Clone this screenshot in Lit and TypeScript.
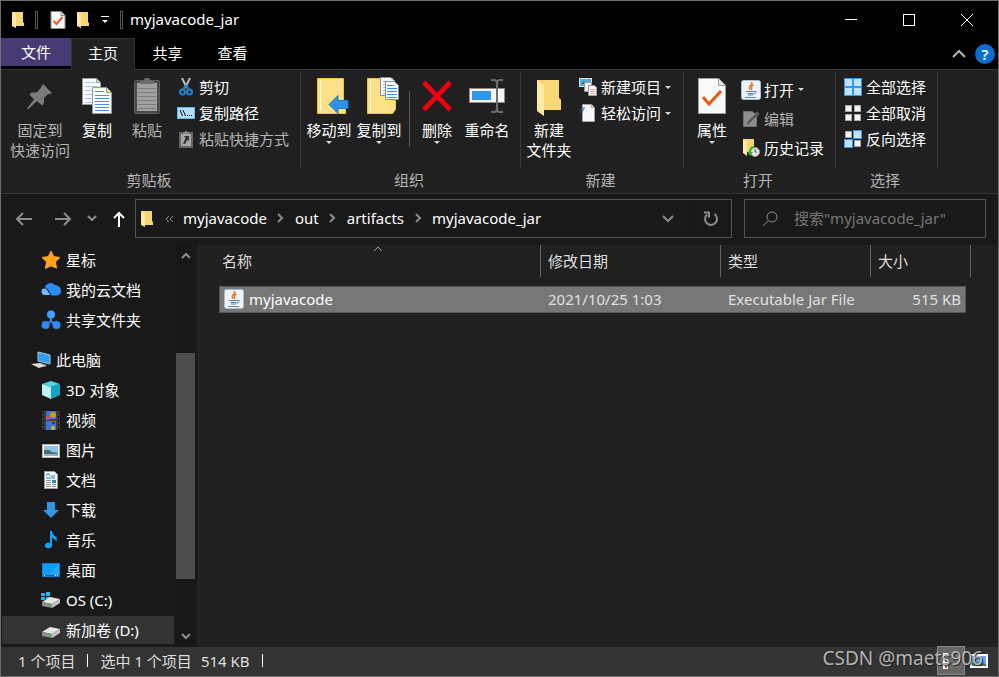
import { LitElement, html, svg, css, nothing } from "lit";
import type { TemplateResult } from "lit";
import { customElement } from "lit/decorators.js";
import { classMap } from "lit/directives/class-map.js";

const icon = (w: number, h: number, body: TemplateResult) =>
  html`<svg width=${w} height=${h} viewBox="0 0 ${w} ${h}" aria-hidden="true">${body}</svg>`;

const lines = (x: number, y: number, w: number, n: number, step: number, color: string) =>
  Array.from({ length: n }, (_, i) => svg`<rect x=${x} y=${y + i * step} width=${w} height="1" fill=${color} />`);

const folderSmall = icon(14, 18, svg`
  <path d="M1 1h11v11h1v3H6z" fill="#f3cc63" />
  <path d="M1 1h11v10l1 1v3H4V3z" fill="#f7d774" />
  <path d="M1 1l4 2v14l-4-2z" fill="#ffe9a3" />`);

const checkDoc = icon(16, 18, svg`
  <path d="M1 .5h10l4 4v13H1z" fill="#f7f9fc" stroke="#8e8e8e" />
  <path d="M11 .5v4h4" fill="#ddd" stroke="#8e8e8e" />
  <path d="M3.500 10l3 3 6-7" fill="none" stroke="#ea5a1b" stroke-width="2" />`);

const caret = icon(8, 5, svg`<path d="M1 1h6L4 4z" fill="#d8d8d8" />`);

const pin = icon(26, 40, svg`
  <path d="M16 8l9 9-2.500 1-2 .5-3.500 3.500v5l-2 2.500-5-4.500-8.500 8-1.500-.5 7-9-4.500-5 2-2h5l3.500-3.500z" fill="#7b7b7b" />`);

const copyBig = icon(32, 40, svg`
  <path d="M1.500 2.500h14l4 4v22h-18z" fill="#fafcff" stroke="#9a9a9a" />
  <path d="M15.500 2.500v4h4" fill="#ddd" stroke="#9a9a9a" />
  ${lines(4, 6, 10, 1, 3, "#a9c6f0")}${lines(4, 10, 13, 5, 4, "#a9c6f0")}
  <path d="M11.500 11.500h14l5 5v21h-19z" fill="#fafcff" stroke="#9a9a9a" />
  <path d="M25.500 11.500v5h5" fill="#ddd" stroke="#9a9a9a" />
  ${lines(14, 15, 9, 1, 3, "#4a8ff0")}${lines(14, 19, 14, 6, 3, "#4a8ff0")}`);

const pasteBig = icon(28, 40, svg`
  <rect x="1.500" y="4.500" width="25" height="33" rx="1" fill="#4a4a4a" stroke="#5b5b5b" />
  <path d="M4 7h20v28H4z" fill="#a0a0a0" />
  ${lines(5, 12, 18, 6, 4, "#7a7a7a")}
  <path d="M7 8V5h3l2-3h4l2 3h3v3z" fill="#6c6c6c" />`);

const scissors = icon(18, 18, svg`
  <path d="M5 0l5 10M13 0L8 10" stroke="#b9bcc0" stroke-width="2" fill="none" />
  <circle cx="5.500" cy="14" r="2.500" fill="none" stroke="#1c86c9" stroke-width="2" />
  <circle cx="12.500" cy="14" r="2.500" fill="none" stroke="#1c86c9" stroke-width="2" />
  <path d="M6 11l3-3 3 3" stroke="#1c86c9" stroke-width="2" fill="none" />`);

const copyPath = icon(18, 12, svg`
  <rect x=".5" y=".5" width="17" height="11" fill="#b5dcf9" stroke="#6bb4ea" />
  <path d="M3 3l2.500 6M6 3l2.500 6" stroke="#111" fill="none" />
  <path d="M10 8h1v1h-1zM12 8h1v1h-1zM14 8h1v1h-1z" fill="#111" />`);

const pasteShortcut = icon(16, 18, svg`
  <rect x="1" y="2" width="14" height="16" fill="#666" />
  <rect x="3" y="4" width="10" height="12" fill="#a6a6a6" />
  <path d="M5 4V2h2l1-2 1 2h2v2z" fill="#8a8a8a" />
  <path d="M6 6h5v5L9.500 9.500 7 14H5l2.500-6z" fill="#333" />`);

const moveTo = icon(40, 40, svg`<g transform="translate(6 0)">
  <path d="M2.500 2.500h26v22h2v13h-28z" fill="#ffe08a" stroke="#e9c447" />
  <path d="M5.500 4v33" stroke="#fff6d6" />
  <path d="M14 28.500l9-9v5h10v8H23v5z" fill="#2f93e4" stroke="#1f78c2" /></g>`);

const copyTo = icon(40, 40, svg`<g transform="translate(6 0)">
  <path d="M2.500 2.500h25v22h3v9l-3 4h-25z" fill="#ffe08a" stroke="#e9c447" />
  <path d="M5.500 4v33" stroke="#fff6d6" />
  <path d="M15.500 1.500h10l4 3v15h-14z" fill="#f6f9ff" stroke="#8d8d8d" />
  ${lines(18, 5, 6, 5, 3, "#8fb4ec")}
  <path d="M20.500 5.500h9l4 4v14h-13z" fill="#f6f9ff" stroke="#8d8d8d" />
  ${lines(22, 9, 7, 1, 3, "#3d86ea")}${lines(22, 12, 10, 4, 3, "#3d86ea")}</g>`);

const deleteBig = icon(32, 40, svg`
  <path d="M2.500 6l27 28M29.500 6l-27 28" stroke="#b3000c" stroke-width="5" />
  <path d="M3 6.500l26 27M29 6.500l-26 27" stroke="#f00012" stroke-width="4" />`);

const renameBig = icon(38, 40, svg`
  <rect x="1.500" y="12.500" width="35" height="14" fill="#f5f5f5" stroke="#8b8b8b" />
  <rect x="4" y="15" width="19" height="9" fill="#3197ea" />
  <path d="M23 4h3q3 0 3 3v26q0 3-3 3h-3M35 4h-3q-3 0-3 3M35 36h-3q-3 0-3-3" fill="none" stroke="#6d6d6d" stroke-width="2" />`);

const newFolder = icon(26, 40, svg`
  <path d="M1 4h22v18l2 2v10H8z" fill="#f5d16b" />
  <path d="M8 4h15v18l2 2v10H8z" fill="#f8d877" />
  <path d="M1 4l7 5v31l-7-5z" fill="#ffe9a6" />`);

const newItem = icon(18, 18, svg`
  <rect x=".5" y=".5" width="12" height="8" fill="#5ca9dc" stroke="#cfe7f5" />
  <path d="M2 6l3-3 3 3z" fill="#2b7b55" />
  <path d="M5.500 4.500h7v9h-7z" fill="#eee" stroke="#999" />
  <path d="M9.500 7.500h6l2 2v8h-8z" fill="#fff" stroke="#999" />
  ${lines(11, 11, 5, 3, 2, "#d99")}`);

const easyAccess = icon(18, 18, svg`
  <path d="M3.500 .5h9l3 3v14h-12z" fill="#f5f7fa" stroke="#a5a5a5" />
  <path d="M12.500 .5v3h3" fill="none" stroke="#a5a5a5" />
  <path d="M2 4h4M1 6h4M0 8h4" stroke="#1d5c99" />`);

const propsBig = icon(28, 40, svg`
  <path d="M.5 2.500h20l7 7v28H.5z" fill="#f8f9fb" stroke="#a0a0a0" />
  <path d="M20.500 2.500v7h7" fill="#e2e2e2" stroke="#a0a0a0" />
  <path d="M5 21l6 7L23 15" fill="none" stroke="#f0560f" stroke-width="3" />`);

const java = icon(20, 20, svg`
  <rect x=".5" y=".5" width="19" height="19" rx="2" fill="#eef3f7" stroke="#a9bccb" />
  <path d="M10.500 2q1 2-1 3.500T9 9.500M12.500 5q-2.500 1-2 2.500t-.5 2.500" fill="none" stroke="#e8792b" stroke-width="1.500" />
  <path d="M5 11.500h8M6.500 13.500h6M7 15h5M4 17.500h11M13 11.500q3-1 2 1t-2.500 1.500" fill="none" stroke="#5d83a5" stroke-width="1" />`);

const editIcon = icon(18, 18, svg`
  <path d="M1.500 1.500h9l4 4v11h-13z" fill="#8d8d8d" stroke="#6f6f6f" />
  <path d="M4 15l1-3L15 2l2 2L7 14z" fill="#555" stroke="#999" stroke-width=".5" />`);

const historyIcon = icon(18, 18, svg`
  <path d="M1 0h11v13H5l-4-2z" fill="#f6d471" />
  <path d="M1 0l4 3v14l-4-3z" fill="#ffeaa8" />
  <circle cx="13" cy="13" r="4.500" fill="#e6e6e6" stroke="#999" />
  <path d="M13 10v3h2" stroke="#555" fill="none" />
  <path d="M12 7q-5 0-5 6l-2-1 3 5 3-4H9q0-3 3-4z" fill="#3fb22b" />`);

const cells = (on: boolean[]) => {
  const at = [[0, 0], [9, 0], [0, 9], [9, 9]];
  return icon(18, 18, svg`${at.map(([x, y], i) => on[i]
    ? svg`<rect x=${x} y=${y} width="9" height="9" fill="#3399ee" /><rect x=${x + 1} y=${y + 1} width="7" height="7" fill="#bfe2ff" />`
    : svg`<rect x=${x + 1.5} y=${y + 1.5} width="6" height="6" fill="#f4f4f4" stroke="#a8a8a8" />`)}`);
};

const chevron = (d: string, w: number, h: number, color: string, sw = 2) =>
  icon(w, h, svg`<path d=${d} fill="none" stroke=${color} stroke-width=${sw} />`);

const drive = svg`
  <path d="M1 12l8-5 10 2-8 5z" fill="#e6e6e6" />
  <path d="M1 12l10 2v4L1 16z" fill="#8f8f8f" />
  <path d="M11 14l8-5v4l-8 5z" fill="#c4c4c4" />
  <rect x="7" y="14" width="2" height="2" fill="#36c736" />`;

interface Place { name: string; art: TemplateResult; root?: boolean; current?: boolean; }

const quick: Place[] = [
  { name: "星标", art: icon(20, 20, svg`<path d="M10 1l2.700 5.600 6.300.9-4.600 4.400 1.200 6.300L10 15.800 4.400 18.500l1.200-6.600L1 7.500l6.300-.9z" fill="#ffa41c" stroke="#ffa41c" stroke-linejoin="round" />`) },
  { name: "我的云文档", art: icon(20, 20, svg`
      <path d="M4 7a6 6 0 0 1 10-2 6 6 0 0 1 6 5.500 4.500 4.500 0 0 1-5 5H10z" fill="#2b8cf6" />
      <path d="M0 12a3.500 3.500 0 0 1 6-3l4 6.500H3A3.500 3.500 0 0 1 0 12z" fill="#6fb9ff" stroke="#191919" />`) },
  { name: "共享文件夹", art: icon(20, 20, svg`
      <path d="M10 5v6M10 11l-5 4M10 11l5 4" stroke="#2b8cf6" stroke-width="2" />
      <circle cx="10" cy="4.500" r="4" fill="#3ea0ff" /><circle cx="4.500" cy="15" r="4" fill="#2b8cf6" /><circle cx="15.500" cy="15" r="4" fill="#2b8cf6" />`) },
];

const places: Place[] = [
  { name: "此电脑", root: true, art: icon(20, 20, svg`
      <path d="M7 2l12 3v9L7 11z" fill="#2f9df0" stroke="#a9c7dc" />
      <path d="M9 13l7 2-2 2-7-2z" fill="#9a9a9a" />
      <path d="M0 14l9-1 5 3-6 2z" fill="#dcdcdc" />`) },
  { name: "3D 对象", art: icon(20, 20, svg`
      <path d="M1 4l9-3 9 3-9 3z" fill="#52d3e0" />
      <path d="M1 4l9 3v12l-9-4z" fill="#bdf1f3" /><path d="M10 7l9-3v11l-9 4z" fill="#12a5c7" />`) },
  { name: "视频", art: icon(20, 20, svg`
      <rect x="1" y="1" width="18" height="19" fill="#3b3b3b" />
      <rect x="5" y="1" width="10" height="9" fill="#3f6fd8" /><rect x="5" y="11" width="10" height="9" fill="#3f6fd8" />
      <circle cx="12" cy="5" r="3" fill="#c7a11a" /><path d="M5 6h4v3H5z" fill="#c8506f" /><circle cx="12" cy="18" r="2" fill="#e2b31c" /><path d="M9 9h6v2H9zM11 12h3v2h-3z" fill="#7a2a1a" />
      <path d="M2.500 2v18M17.500 2v18" stroke="#111" stroke-dasharray="2 2" />`) },
  { name: "图片", art: icon(20, 20, svg`
      <rect x="1.500" y="4.500" width="17" height="13" fill="#fff" stroke="#b5b5b5" />
      <rect x="3" y="6" width="14" height="10" fill="#8cc4ef" />
      <path d="M3 10q5-1 8 2l6 1v3H3z" fill="#47715e" /><path d="M3 14h14v2H3z" fill="#8fb5c9" />`) },
  { name: "文档", art: icon(20, 20, svg`
      <path d="M3.500 1.500h10l3 3v14h-13z" fill="#fafafa" stroke="#a0a0a0" />
      <path d="M5 6l2-3 2 3M5 8h9M10 6h4" stroke="#1d84d0" fill="none" />
      ${lines(5, 10, 5, 4, 2, "#8f8f8f")}${lines(11, 14, 4, 2, 2, "#8f8f8f")}<rect x="11" y="10" width="4" height="3" fill="#3c80b0" />`) },
  { name: "下载", art: icon(20, 20, svg`<path d="M6 2h8v8h4l-8 8-8-8h4z" fill="#3594e6" />`) },
  { name: "音乐", art: icon(20, 20, svg`
      <ellipse cx="7.500" cy="15.500" rx="3.500" ry="2.700" fill="#18a0ff" />
      <path d="M9 1h2q0 3 3 5t1 6q0-3-4-4v8H9z" fill="#18a0ff" />`) },
  { name: "桌面", art: icon(20, 20, svg`
      <rect x="1.500" y="3.500" width="17" height="13" fill="#0f9bff" stroke="#0a7fd8" />
      <path d="M8 15L18 4v11z" fill="#2ba8ff" /><path d="M2 15.500h16" stroke="#0b5ea8" /><path d="M3 15.500h1M14 15.500h1M16 15.500h1" stroke="#fff" />`) },
  { name: "OS (C:)", art: icon(20, 20, svg`
      <path d="M0 3h4v3H0zM5 2h4v4H5zM0 7h4v3H0zM5 7h4v4H5z" fill="#19b9f0" />${drive}`) },
  { name: "新加卷 (D:)", current: true, art: icon(20, 20, drive) },
];

@customElement("app-root")
export class AppRoot extends LitElement {
  static styles = css`
    :host {
      display: flex;
      flex-direction: column;
      box-sizing: border-box;
      position: relative;
      min-height: 100vh;
      border: 1px solid #6e6e6e;
      background: #191919;
      color: #fff;
      font: 15px/20px "Noto Sans", "Noto Sans CJK SC", sans-serif;
    }
    *, *::before { box-sizing: border-box; }
    svg { display: block; flex: none; }
    button, input {
      font: inherit;
      color: inherit;
      background: none;
      border: 0;
      padding: 0;
      margin: 0;
      white-space: nowrap;
    }
    a { color: inherit; text-decoration: none; }
    ul { list-style: none; margin: 0; padding: 0; }

    .title { display: flex; align-items: center; height: 37px; padding-left: 10px; background: #000; }
    .quick { display: flex; align-items: center; }
    .bar { width: 3px; height: 18px; margin: 0 12px 0 10px; border: 1px solid #555; }
    .more { padding: 0 11px; }
    .quick .folder { margin-left: 10px; }
    .more + .bar { margin: 0 7px 0 0; }
    h1 { margin: 0; padding-bottom: 2px; font-size: 15px; font-weight: 400; flex: 1; }
    .win { width: 58px; height: 37px; display: grid; place-items: center; }
    .controls { display: flex; margin-right: 2px; }

    .tabs { display: flex; height: 31px; background: #000; }
    .tab { width: 65px; height: 31px; padding-bottom: 2px; }
    .tab.file { width: 70px; height: 28px; padding: 0; background: #483b73; }
    .tab.on { width: 64px; height: 32px; padding-bottom: 4px; background: #202020; border: 1px solid #333; border-bottom: 0; position: relative; }
    .help { margin-left: auto; display: flex; align-items: center; gap: 9px; padding-right: 3px; }
    .q { width: 20px; height: 20px; border-radius: 50%; background: #0a6fd0; font-weight: 600; line-height: 20px; text-align: center; }

    .ribbon { display: flex; background: #202020; border: solid #333; border-width: 1px 0; }
    .group { display: flex; flex-direction: column; margin-top: 2px; border-right: 1px solid #3a3a3a; }
    .body { display: flex; height: 96px; padding: 2px 0 0 3px; }
    .group.first .body { padding-left: 7px; }
    .group.wide .body { padding-right: 8px; }
    .caption { height: 25px; padding-right: 4px; text-align: center; color: #b4b4b4; line-height: 24px; background: #202020; margin-right: -1px; }
    .big { width: 50px; margin-top: 2px; display: flex; flex-direction: column; align-items: center; align-self: flex-start; }
    .big.pin { width: 64px; }
    .big svg + span { margin-top: 4px; }
    .big span { display: block; white-space: pre-line; line-height: 20px; }
    .dim { color: #b4b4b4; }
    .split { width: 1px; height: 56px; margin: 17px 2px 0 5px; background: #555; }
    .list { display: flex; flex-direction: column; margin: 0 11px 0 4px; }
    .small { display: flex; align-items: center; height: 26px; gap: 3px; }
    .list.loose { padding-top: 1px; }
    .list.loose .small { height: 29px; }
    .slot { width: 20px; display: grid; place-items: center; flex: none; }

    .nav { display: flex; align-items: center; height: 51px; padding: 0 12px 2px 14px; }
    .arrows { display: flex; align-items: center; gap: 15px; width: 120px; }
    .arrows button { display: grid; place-items: center; height: 38px; }
    .back { margin-right: 6px; }
    .path { flex: 1; display: flex; align-items: center; height: 39px; border: 1px solid #535353; padding-left: 4px; min-width: 0; }
    .crumbs { display: flex; align-items: center; flex: 1; padding-bottom: 2px; }
    .crumbs li { display: flex; align-items: center; }
    .lead { width: 29px; padding-left: 11px; }
    .sep { width: 28px; display: grid; place-items: center; }
    .tool { width: 42px; height: 37px; display: grid; place-items: center; }
    .tool + .tool { border-left: 1px solid #151515; }
    .search { display: flex; align-items: center; gap: 16px; width: 242px; height: 39px; margin-left: 12px; padding-left: 17px; border: 1px solid #535353; }
    .search input { flex: 1; min-width: 0; padding-bottom: 2px; outline: 0; }
    .search input::placeholder { color: #777; opacity: 1; }

    .work { display: flex; flex: 1; }
    .side { display: flex; width: 198px; padding-right: 3px; border-right: 1px solid #2b2b2b; }
    .tree { flex: 1; padding: 1px 2px 0 1px; }
    .tree ul + ul { margin-top: 12px; }
    .tree li + li { margin-top: 2px; }
    .place { display: flex; align-items: center; gap: 5px; height: 28px; padding-left: 39px; }
    .place.root { padding-left: 29px; }
    .place.current { background: #333; }
    .scroll { display: flex; flex-direction: column; width: 19px; background: #171717; align-items: stretch; }
    .scroll button { height: 22px; display: grid; place-items: center; }
    .before { flex: 86; }
    .thumb { flex: 226; background: #4d4d4d; }
    .after { flex: 46; }

    .files { flex: 1; background: #202020; padding-left: 20px; }
    table { table-layout: fixed; width: 752px; border-spacing: 0; }
    .c-name { width: 322px; }
    .c-date { width: 180px; }
    .c-type { width: 150px; }
    .c-size { width: 100px; }
    th { padding: 0 0 9px; font-weight: 400; position: relative; }
    th button { display: block; width: 100%; height: 32px; padding-left: 7px; text-align: left; border-right: 1px solid #636363; color: #dedede; }
    th.name button { padding-left: 3px; }
    .sort { position: absolute; top: 0; left: 50%; margin-left: -7px; }
    td { padding: 0; white-space: nowrap; }
    .cell { display: flex; align-items: center; height: 27px; padding: 0 7px 2px; background: #777; border: solid #555; border-width: 1px 0; color: #e0e0e0; }
    .name .cell { gap: 5px; padding: 0 4px 2px; border-left-width: 1px; color: #fff; }
    .size .cell { justify-content: flex-end; margin-right: 5px; padding-right: 4px; border-right-width: 1px; }

    .status { display: flex; align-items: center; height: 29px; padding: 0 0 2px 17px; background: #333; color: #dedede; }
    .tick { width: 1px; height: 13px; margin: 0 12px; background: #fff; }
    .gap { margin-left: 9px; }
    .views { display: flex; align-items: center; margin-left: auto; padding-right: 6px; }
    .views button { display: grid; place-items: center; height: 29px; width: 27px; }
    .views .on { width: 28px; background: #666; border: 1px solid #888; }
    .mark { position: absolute; right: 15px; bottom: 5px; font-size: 19px; line-height: 26px; color: rgba(205, 205, 205, 0.85); text-shadow: 1px 1px 1px #222; pointer-events: none; }
  `;

  private big(art: TemplateResult, text: string, opt: { dim?: boolean; pin?: boolean; drop?: boolean } = {}) {
    return html`<button class=${classMap({ big: true, dim: !!opt.dim, pin: !!opt.pin })}>
      ${art}<span>${text}</span>${opt.drop ? caret : nothing}
    </button>`;
  }

  private small(art: TemplateResult, text: string, opt: { dim?: boolean; drop?: boolean } = {}) {
    return html`<button class=${classMap({ small: true, dim: !!opt.dim })}>
      <span class="slot">${art}</span><span>${text}</span>${opt.drop ? caret : nothing}
    </button>`;
  }

  private group(caption: string, body: TemplateResult, extra = "") {
    return html`<section class="group ${extra}" aria-label=${caption}>
      <div class="body">${body}</div>
      <div class="caption">${caption}</div>
    </section>`;
  }

  private branch(items: Place[]) {
    return html`<ul>${items.map((p) => html`<li>
      <a href="#" class=${classMap({ place: true, root: !!p.root, current: !!p.current })}>${p.art}<span>${p.name}</span></a>
    </li>`)}</ul>`;
  }

  render() {
    const crumbs = ["myjavacode", "out", "artifacts", "myjavacode_jar"];
    return html`
      <header class="title">
        <div class="quick">
          ${folderSmall}<span class="bar"></span>
          <button aria-label="属性">${checkDoc}</button>
          <button class="folder" aria-label="新建文件夹">${folderSmall}</button>
          <button class="more" aria-label="自定义快速访问工具栏">${icon(8, 8, svg`<path d="M0 .5h8" stroke="#fff" /><path d="M1 4h6L4 7z" fill="#fff" />`)}</button>
          <span class="bar"></span>
        </div>
        <h1>myjavacode_jar</h1>
        <div class="controls">
          <button class="win" aria-label="最小化">${icon(12, 12, svg`<path d="M0 5.500h12" stroke="#fff" />`)}</button>
          <button class="win" aria-label="最大化">${icon(12, 12, svg`<rect x=".5" y=".5" width="11" height="11" fill="none" stroke="#fff" />`)}</button>
          <button class="win" aria-label="关闭">${icon(12, 12, svg`<path d="M0 0l12 12M12 0L0 12" stroke="#fff" />`)}</button>
        </div>
      </header>

      <nav class="tabs">
        <button class="tab file">文件</button>
        <button class="tab on">主页</button>
        <button class="tab">共享</button>
        <button class="tab">查看</button>
        <div class="help">
          <button aria-label="折叠功能区">${chevron("M1 8l6-6 6 6", 14, 10, "#b5b5b5")}</button>
          <button class="q" aria-label="帮助">?</button>
        </div>
      </nav>

      <div class="ribbon">
        ${this.group("剪贴板", html`
          ${this.big(pin, "固定到\n快速访问", { dim: true, pin: true })}
          ${this.big(copyBig, "复制")}
          ${this.big(pasteBig, "粘贴", { dim: true })}
          <div class="list">
            ${this.small(scissors, "剪切")}
            ${this.small(copyPath, "复制路径")}
            ${this.small(pasteShortcut, "粘贴快捷方式", { dim: true })}
          </div>`, "first")}
        ${this.group("组织", html`
          ${this.big(moveTo, "移动到", { drop: true })}
          ${this.big(copyTo, "复制到", { drop: true })}
          <span class="split"></span>
          ${this.big(deleteBig, "删除", { drop: true })}
          ${this.big(renameBig, "重命名")}`, "wide")}
        ${this.group("新建", html`
          ${this.big(newFolder, "新建\n文件夹")}
          <div class="list">
            ${this.small(newItem, "新建项目", { drop: true })}
            ${this.small(easyAccess, "轻松访问", { drop: true })}
          </div>`)}
        ${this.group("打开", html`
          ${this.big(propsBig, "属性", { drop: true })}
          <div class="list loose">
            ${this.small(java, "打开", { drop: true })}
            ${this.small(editIcon, "编辑", { dim: true })}
            ${this.small(historyIcon, "历史记录")}
          </div>`)}
        ${this.group("选择", html`
          <div class="list">
            ${this.small(cells([true, true, true, true]), "全部选择")}
            ${this.small(cells([false, false, false, false]), "全部取消")}
            ${this.small(cells([false, true, true, false]), "反向选择")}
          </div>`)}
      </div>

      <div class="nav">
        <div class="arrows">
          <button class="back" aria-label="后退">${icon(18, 14, svg`<path d="M17 7H2M8 1L2 7l6 6" fill="none" stroke="#8c8c8c" stroke-width="2" />`)}</button>
          <button aria-label="前进">${icon(18, 14, svg`<path d="M1 7h15M10 1l6 6-6 6" fill="none" stroke="#8c8c8c" stroke-width="2" />`)}</button>
          <button aria-label="最近浏览的位置">${chevron("M1 1l4 4 4-4", 10, 7, "#8c8c8c")}</button>
          <button aria-label="上移">${icon(14, 16, svg`<path d="M7 16V2M2 7l5-5 5 5" fill="none" stroke="#fff" stroke-width="2" />`)}</button>
        </div>
        <div class="path">
          ${folderSmall}
          <button class="lead" aria-label="上级">${icon(9, 8, svg`<path d="M4 1L1 4l3 3M8 1L5 4l3 3" fill="none" stroke="#8c8c8c" />`)}</button>
          <ul class="crumbs">
            ${crumbs.map((c, i) => html`<li>
              ${i ? html`<span class="sep">${chevron("M1 1l4 4-4 4", 7, 10, "#8c8c8c")}</span>` : nothing}
              <a href="#">${c}</a>
            </li>`)}
          </ul>
          <button class="tool" aria-label="以前的位置">${chevron("M1 1l5 5 5-5", 12, 8, "#8c8c8c")}</button>
          <button class="tool" aria-label="刷新">${icon(16, 16, svg`<path d="M11.500 3A6 6 0 1 1 4 3.500" fill="none" stroke="#8c8c8c" stroke-width="2" /><path d="M1 1.500h5v5" fill="none" stroke="#8c8c8c" stroke-width="2" />`)}</button>
        </div>
        <label class="search">
          ${icon(16, 16, svg`<circle cx="10" cy="6" r="5" fill="none" stroke="#8c8c8c" /><path d="M6.500 9.500L1 15" stroke="#8c8c8c" />`)}
          <input type="text" aria-label="搜索" placeholder='搜索"myjavacode_jar"' />
        </label>
      </div>

      <div class="work">
        <aside class="side">
          <nav class="tree">${this.branch(quick)}${this.branch(places)}</nav>
          <div class="scroll">
            <button aria-label="向上滚动">${chevron("M1 6l4-4 4 4", 10, 8, "#8c8c8c")}</button>
            <span class="before"></span><span class="thumb"></span><span class="after"></span>
            <button aria-label="向下滚动">${chevron("M1 2l4 4 4-4", 10, 8, "#8c8c8c")}</button>
          </div>
        </aside>
        <main class="files">
          <table>
            <colgroup><col class="c-name" /><col class="c-date" /><col class="c-type" /><col class="c-size" /></colgroup>
            <thead>
              <tr>
                <th class="name"><button>名称</button><span class="sort">${chevron("M1 6l4-4 4 4", 10, 7, "#a0a0a0", 1)}</span></th>
                <th><button>修改日期</button></th>
                <th><button>类型</button></th>
                <th><button>大小</button></th>
              </tr>
            </thead>
            <tbody>
              <tr>
                <td class="name"><div class="cell">${java}<span>myjavacode</span></div></td>
                <td><div class="cell">2021/10/25 1:03</div></td>
                <td><div class="cell">Executable Jar File</div></td>
                <td class="size"><div class="cell">515 KB</div></td>
              </tr>
            </tbody>
          </table>
        </main>
      </div>

      <footer class="status">
        <span>1 个项目</span><span class="tick"></span>
        <span>选中 1 个项目</span><span class="gap">514 KB</span><span class="tick"></span>
        <div class="views">
          <button class="on" aria-label="详细信息">${icon(20, 18, svg`
            <path d="M2 1h5v4H2zM2 7h5v4H2zM2 13h5v4H2z" fill="#fff" />
            <path d="M4 2h2v2H4z" fill="#3a6fb5" /><path d="M4 8h2v2H4z" fill="#555" /><path d="M4 14h2v2H4z" fill="#b5432b" />
            <path d="M9 3h4M15 3h4M9 9h4M15 9h4M9 15h4M15 15h4" stroke="#777" />`)}</button>
          <button aria-label="大缩略图">${icon(18, 14, svg`
            <rect width="18" height="14" fill="#fff" /><rect x="2" y="2" width="14" height="10" fill="#68a8ec" />
            <path d="M2 9q6-2 14 1v2H2z" fill="#3f6b57" />`)}</button>
        </div>
      </footer>
      <div class="mark">CSDN @maets906</div>
    `;
  }
}
